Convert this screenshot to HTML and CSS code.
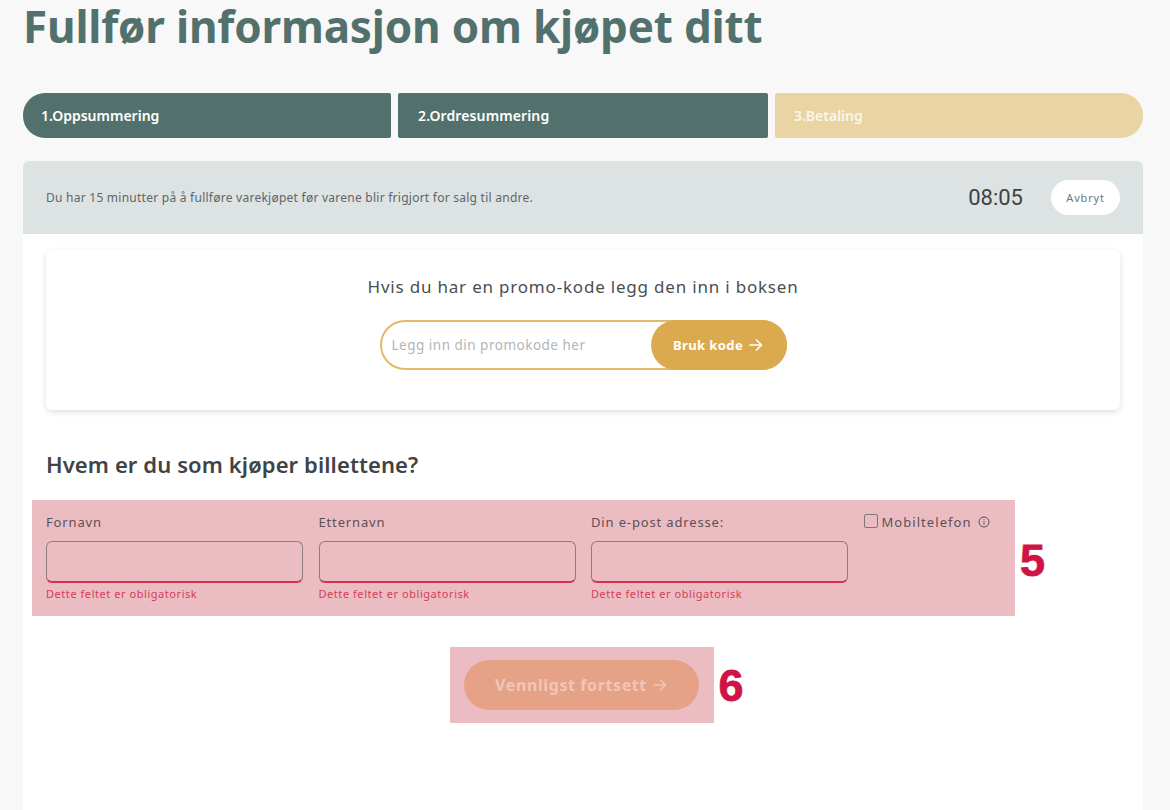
FILE: index.html
```html
<!DOCTYPE html>
<html lang="no">
<head>
<meta charset="utf-8">
<title>Fullfør informasjon om kjøpet ditt</title>
<link rel="stylesheet" href="styles.css">
</head>
<body>
<main class="page">
  <h1 class="title">Fullfør informasjon om kjøpet ditt</h1>
  <ol class="steps">
    <li class="step step-first">1.Oppsummering</li>
    <li class="step step-mid">2.Ordresummering</li>
    <li class="step step-last">3.Betaling</li>
  </ol>
  <section class="panel">
    <header class="banner">
      <p class="banner-text">Du har 15 minutter på å fullføre varekjøpet før varene blir frigjort for salg til andre.</p>
      <span class="timer">08:05</span>
      <button class="cancel" type="button">Avbryt</button>
    </header>
    <div class="content">
      <div class="promo">
        <p class="promo-title">Hvis du har en promo-kode legg den inn i boksen</p>
        <div class="promo-field">
          <input class="promo-input" type="text" placeholder="Legg inn din promokode her">
          <button class="promo-btn" type="button">Bruk kode
            <svg class="arrow" viewBox="0 0 16 16" width="16" height="16" aria-hidden="true"><path d="M2 8h11M8.5 3l5 5-5 5" fill="none" stroke="currentColor" stroke-width="1.6" stroke-linecap="round" stroke-linejoin="round"/></svg>
          </button>
        </div>
      </div>
      <h2 class="who">Hvem er du som kjøper billettene?</h2>
      <div class="form-wrap">
        <div class="form-mark">
          <div class="field">
            <label class="label">Fornavn</label>
            <div class="input"></div>
            <p class="error">Dette feltet er obligatorisk</p>
          </div>
          <div class="field">
            <label class="label">Etternavn</label>
            <div class="input"></div>
            <p class="error">Dette feltet er obligatorisk</p>
          </div>
          <div class="field">
            <label class="label">Din e-post adresse:</label>
            <div class="input"></div>
            <p class="error">Dette feltet er obligatorisk</p>
          </div>
          <div class="phone">
            <span class="check"></span>
            <span class="label phone-label">Mobiltelefon</span>
            <svg class="info" viewBox="0 0 12 12" width="12" height="12" aria-hidden="true"><circle cx="6" cy="6" r="5" fill="none" stroke="currentColor"/><path d="M6 5.4v3M6 3.4v.8" fill="none" stroke="currentColor"/></svg>
          </div>
        </div>
        <span class="num num-5">5</span>
      </div>
      <div class="continue-wrap">
        <div class="continue-mark">
          <button class="continue" type="button">Vennligst fortsett
            <svg class="arrow" viewBox="0 0 16 16" width="16" height="16" aria-hidden="true"><path d="M2 8h11M8.5 3l5 5-5 5" fill="none" stroke="currentColor" stroke-width="1.5" stroke-linecap="round" stroke-linejoin="round"/></svg>
          </button>
          <span class="num num-6">6</span>
        </div>
      </div>
    </div>
  </section>
</main>
</body>
</html>
```
FILE: styles.css
```css
* { box-sizing: border-box; }
html, body { margin: 0; height: 100%; }
body {
  background: #f8f8f8;
  font-family: "Noto Sans", "Open Sans", sans-serif;
  color: #3f4447;
  overflow: hidden;
}
.page {
  height: 100vh;
  padding: 0 27px 0 23px;
  display: flex;
  flex-direction: column;
}
.title {
  margin: 0;
  flex: none;
  height: 93px;
  font-size: 44px;
  line-height: 52px;
  font-weight: 700;
  letter-spacing: -.18px;
  color: #52716c;
}
.steps {
  list-style: none;
  margin: 0;
  padding: 0;
  flex: none;
  display: grid;
  grid-template-columns: 368px 370px 368px;
  gap: 7px;
  height: 45px;
}
.step {
  background: #52716c;
  color: #fff;
  font-size: 14px;
  font-weight: 600;
  line-height: 45px;
  padding-left: 18px;
  border-radius: 2px;
}
.step-first { border-radius: 22px 2px 2px 22px; }
.step-mid { padding-left: 20px; letter-spacing: .12px; }
.step-last {
  background: #ead4a3;
  color: #fbf6ea;
  padding-left: 19px;
  border-radius: 2px 22px 22px 2px;
}
.panel {
  margin-top: 23px;
  flex: 1;
  min-height: 0;
  background: #fff;
  border-radius: 6px 6px 0 0;
}
.banner {
  height: 73px;
  background: #dde2e3;
  border-radius: 6px 6px 0 0;
  display: flex;
  align-items: center;
  padding: 0 23px;
}
.banner-text {
  margin: 0;
  flex: 1;
  font-size: 12px;
  letter-spacing: .25px;
  color: #5f6669;
}
.timer {
  font-size: 22px;
  color: #3c4245;
  margin-right: 28px;
  font-family: "Roboto", sans-serif;
}
.cancel {
  width: 69px;
  height: 35px;
  border: 0;
  border-radius: 18px;
  background: #fff;
  color: #6d7679;
  font: 11px "Noto Sans", sans-serif;
  letter-spacing: .8px;
  padding: 0;
}
.content { padding: 16px 23px 0; }
.promo {
  height: 160px;
  background: #fff;
  border-radius: 6px;
  box-shadow: 0 2px 6px rgba(0, 0, 0, .13);
  padding-top: 26px;
  display: flex;
  flex-direction: column;
  align-items: center;
}
.promo-title {
  margin: 0;
  font-size: 17px;
  line-height: 22px;
  letter-spacing: .8px;
  color: #4a4f52;
}
.promo-field {
  margin-top: 22px;
  width: 407px;
  height: 50px;
  display: flex;
  border: 2px solid #e3b96a;
  border-radius: 25px;
  position: relative;
}
.promo-input {
  flex: 1;
  min-width: 0;
  border: 0;
  background: transparent;
  outline: 0;
  padding: 0 0 0 10px;
  font: 13.5px "Noto Sans", sans-serif;
  letter-spacing: .5px;
}
.promo-input::placeholder { color: #b3b5b7; }
.promo-btn {
  position: absolute;
  top: -2px;
  right: -2px;
  width: 136px;
  height: 50px;
  border: 0;
  border-radius: 25px;
  background: #dcaa4e;
  color: #fff;
  font: 700 13px "Noto Sans", sans-serif;
  letter-spacing: .4px;
  display: flex;
  align-items: center;
  justify-content: center;
  gap: 5px;
  padding: 0;
}
.who {
  margin: 39px 0 0;
  font-size: 22px;
  line-height: 30px;
  font-weight: 600;
  letter-spacing: .1px;
  color: #3f4447;
}
.form-wrap {
  margin: 21px 0 0 -14px;
  display: flex;
}
.form-mark {
  width: 983px;
  height: 116px;
  background: #ecbcc3;
  padding: 13px 0 0 14px;
  display: flex;
}
.field { width: 272.5px; }
.field .input { width: 257px; }
.label {
  display: block;
  font-size: 13px;
  line-height: 18px;
  letter-spacing: .85px;
  color: #5a5255;
}
.input {
  margin-top: 10px;
  height: 42px;
  border: 1px solid #8b7c80;
  border-bottom: 2px solid #d5324f;
  border-radius: 6px;
}
.error {
  margin: 3px 0 0;
  font-size: 11px;
  line-height: 16px;
  letter-spacing: .55px;
  color: #d63c57;
}
.phone {
  display: flex;
  align-items: flex-start;
  gap: 4px;
  color: #5a5255;
}
.check {
  width: 14px;
  height: 14px;
  margin-top: 1px;
  border: 1px solid #7f7478;
  border-radius: 2px;
}
.phone-label { letter-spacing: 1.05px; }
.info { margin: 3px 0 0 2px; }
.num {
  font-family: "Liberation Sans", Arial, sans-serif;
  font-weight: 700;
  font-size: 45px;
  color: #cf1445;
  line-height: 1;
  -webkit-text-stroke: .8px #cf1445;
}
.num-5 { margin: 38px 0 0 5px; }
.num-6 { position: absolute; left: 100%; top: 16px; margin-left: 5px; }
.continue-wrap {
  margin-top: 31px;
  display: flex;
  justify-content: center;
  padding-right: 3px;
}
.continue-mark {
  position: relative;
  width: 264px;
  height: 76px;
  background: #ecbcc3;
  display: flex;
  align-items: center;
  justify-content: center;
}
.continue {
  width: 235px;
  height: 50px;
  border: 0;
  border-radius: 25px;
  background: #e5a287;
  color: #f1c6b9;
  font: 700 16px "Noto Sans", sans-serif;
  letter-spacing: .6px;
  display: flex;
  align-items: center;
  justify-content: center;
  gap: 5px;
  padding: 0;
}
```
